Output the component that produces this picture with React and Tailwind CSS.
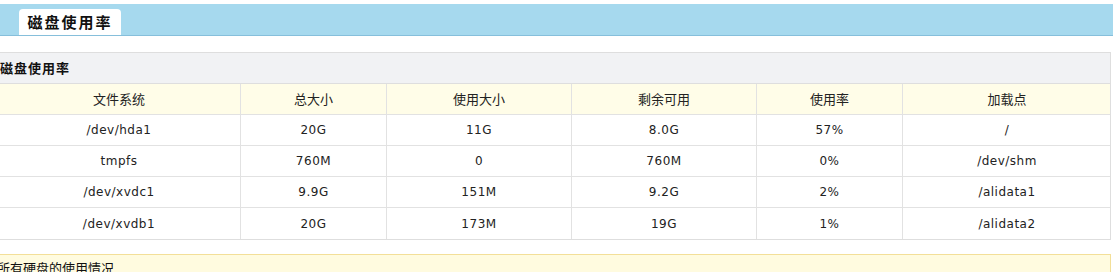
const COLUMNS = ['文件系统', '总大小', '使用大小', '剩余可用', '使用率', '加载点'];

const ROWS = [
  ['/dev/hda1', '20G', '11G', '8.0G', '57%', '/'],
  ['tmpfs', '760M', '0', '760M', '0%', '/dev/shm'],
  ['/dev/xvdc1', '9.9G', '151M', '9.2G', '2%', '/alidata1'],
  ['/dev/xvdb1', '20G', '173M', '19G', '1%', '/alidata2'],
];

const WIDTHS = ['w-[243px]', 'w-[146px]', 'w-[185px]', 'w-[185px]', 'w-[146px]', 'w-[208px]'];

const cjk = "font-['Noto_Sans_CJK_SC',sans-serif]";
const latin = "font-['DejaVu_Sans','Noto_Sans_CJK_SC',sans-serif]";

function Cell({ children, idx, head }) {
  return (
    <div
      className={`${WIDTHS[idx]} flex shrink-0 items-center justify-center ${
        idx < 5 ? 'border-r border-[#e2e2e2]' : ''
      } ${head ? `${cjk} text-[13px]` : `${latin} text-[12px]`} text-[#222]`}
    >
      {children}
    </div>
  );
}

export default function App() {
  return (
    <div className="h-[272px] w-[1113px] overflow-hidden bg-white">
      <div className="mt-[4px] flex h-[32px] items-end border-b border-[#86bfdb] bg-[#a6d9ee] pl-[19px]">
        <div
          className={`flex h-[26px] w-[102px] items-center justify-center rounded-t-[4px] bg-white text-[15px] font-bold tracking-[2px] text-[#111] ${cjk}`}
        >
          磁盘使用率
        </div>
      </div>

      <div className="-ml-[3px] mt-[16px] w-[1114px] border border-[#dedede]">
        <div
          className={`flex h-[31px] items-center border-b border-[#dedede] bg-[#f1f2f4] pl-[2px] text-[13px] font-bold tracking-[1px] text-[#111] ${cjk}`}
        >
          磁盘使用率
        </div>
        <div className="flex h-[31px] border-b border-[#e2e2e2] bg-[#fffde8]">
          {COLUMNS.map((c, i) => (
            <Cell key={c} idx={i} head>
              {c}
            </Cell>
          ))}
        </div>
        {ROWS.map((row, r) => (
          <div
            key={r}
            className={`flex h-[31px] bg-white ${r < ROWS.length - 1 ? 'border-b border-[#e2e2e2]' : ''}`}
          >
            {row.map((v, i) => (
              <Cell key={i} idx={i}>
                <span className="tracking-[0.5px]">{v}</span>
              </Cell>
            ))}
          </div>
        ))}
      </div>

      <div
        className={`-ml-[6px] mt-[14px] w-[1117px] border border-[#f3df98] bg-[#fffbdf] pt-[5px] pl-[2px] text-[13px] leading-[16px] text-[#111] ${cjk}`}
      >
        所有硬盘的使用情况
      </div>
    </div>
  );
}
